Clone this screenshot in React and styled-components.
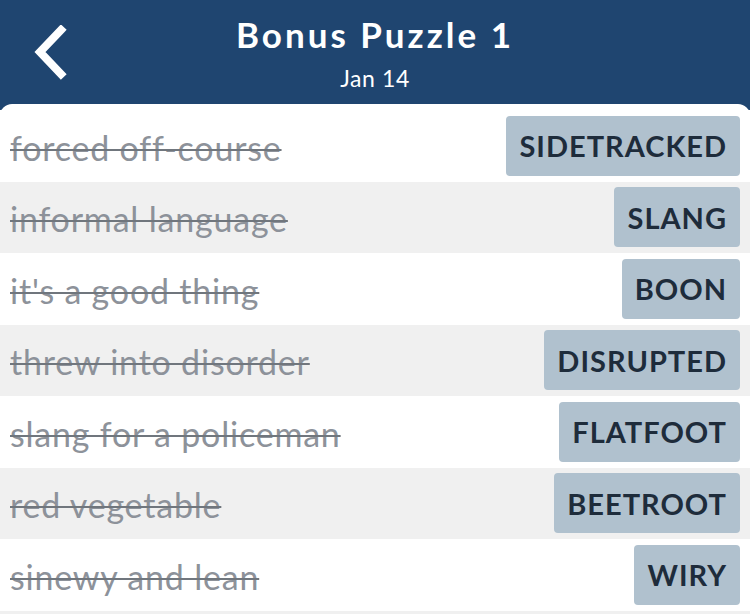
import React from "react";
import styled, { createGlobalStyle } from "styled-components";

const GlobalStyle = createGlobalStyle`
  html, body {
    margin: 0;
    padding: 0;
    height: 100%;
    overflow: hidden;
    background: #1f4570;
  }
  body {
    font-family: "Lato", "Open Sans", sans-serif;
  }
`;

const clues = [
  { clue: "forced off-course", answer: "SIDETRACKED" },
  { clue: "informal language", answer: "SLANG" },
  { clue: "it's a good thing", answer: "BOON" },
  { clue: "threw into disorder", answer: "DISRUPTED" },
  { clue: "slang for a policeman", answer: "FLATFOOT" },
  { clue: "red vegetable", answer: "BEETROOT" },
  { clue: "sinewy and lean", answer: "WIRY" },
];

const App = () => {
  return (
    <>
      <GlobalStyle />
      <Page>
        <Header>
          <BackButton aria-label="Back">
            <svg width="40" height="56" viewBox="0 0 40 56">
              <polyline
                points="29,5 8,27 29,49"
                fill="none"
                stroke="#ffffff"
                strokeWidth="8"
                strokeLinecap="square"
              />
            </svg>
          </BackButton>
          <Title>Bonus Puzzle 1</Title>
          <Subtitle>Jan 14</Subtitle>
        </Header>
        <Panel>
          {clues.map((item, i) => (
            <Row key={item.clue} shaded={i % 2 === 1}>
              <Clue>{item.clue}</Clue>
              <Answer>{item.answer}</Answer>
            </Row>
          ))}
          <Filler />
        </Panel>
      </Page>
    </>
  );
};

const Page = styled.div`
  width: 750px;
  height: 614px;
  overflow: hidden;
  background: #1f4570;
  display: flex;
  flex-direction: column;
`;

const Header = styled.header`
  position: relative;
  height: 104px;
  flex-shrink: 0;
  display: flex;
  flex-direction: column;
  align-items: center;
  color: #ffffff;
`;

const BackButton = styled.button`
  position: absolute;
  left: 32px;
  top: 25px;
  padding: 0;
  border: none;
  background: none;
  display: flex;
`;

const Title = styled.h1`
  margin: 12px 0 0;
  font-size: 35px;
  font-weight: 700;
  line-height: 44px;
  letter-spacing: 3px;
`;

const Subtitle = styled.div`
  font-size: 23px;
  line-height: 26px;
  margin-top: 9px;
  letter-spacing: 0.6px;
`;

const Panel = styled.main`
  flex: 1;
  display: flex;
  flex-direction: column;
  background: #ffffff;
  border-radius: 12px 12px 0 0;
  padding-top: 6px;
`;

const Row = styled.div`
  height: 71.5px;
  flex-shrink: 0;
  box-sizing: border-box;
  padding: 0 10px;
  display: flex;
  align-items: center;
  justify-content: space-between;
  background: ${(p) => (p.shaded ? "#f0f0f0" : "#ffffff")};
`;

const Filler = styled.div`
  flex: 1;
  background: #f0f0f0;
`;

const Clue = styled.span`
  font-size: 34px;
  letter-spacing: 0.8px;
  color: #8d929a;
  text-decoration: line-through;
  text-decoration-color: #70767d;
  text-decoration-thickness: 1.5px;
  white-space: nowrap;
  padding-top: 3px;
`;

const Answer = styled.span`
  height: 60px;
  display: flex;
  align-items: center;
  padding: 0 13px;
  background: #b0c1ce;
  border-radius: 4px;
  color: #1e2c3b;
  font-size: 29px;
  font-weight: 700;
  letter-spacing: 1px;
`;

export default App;
